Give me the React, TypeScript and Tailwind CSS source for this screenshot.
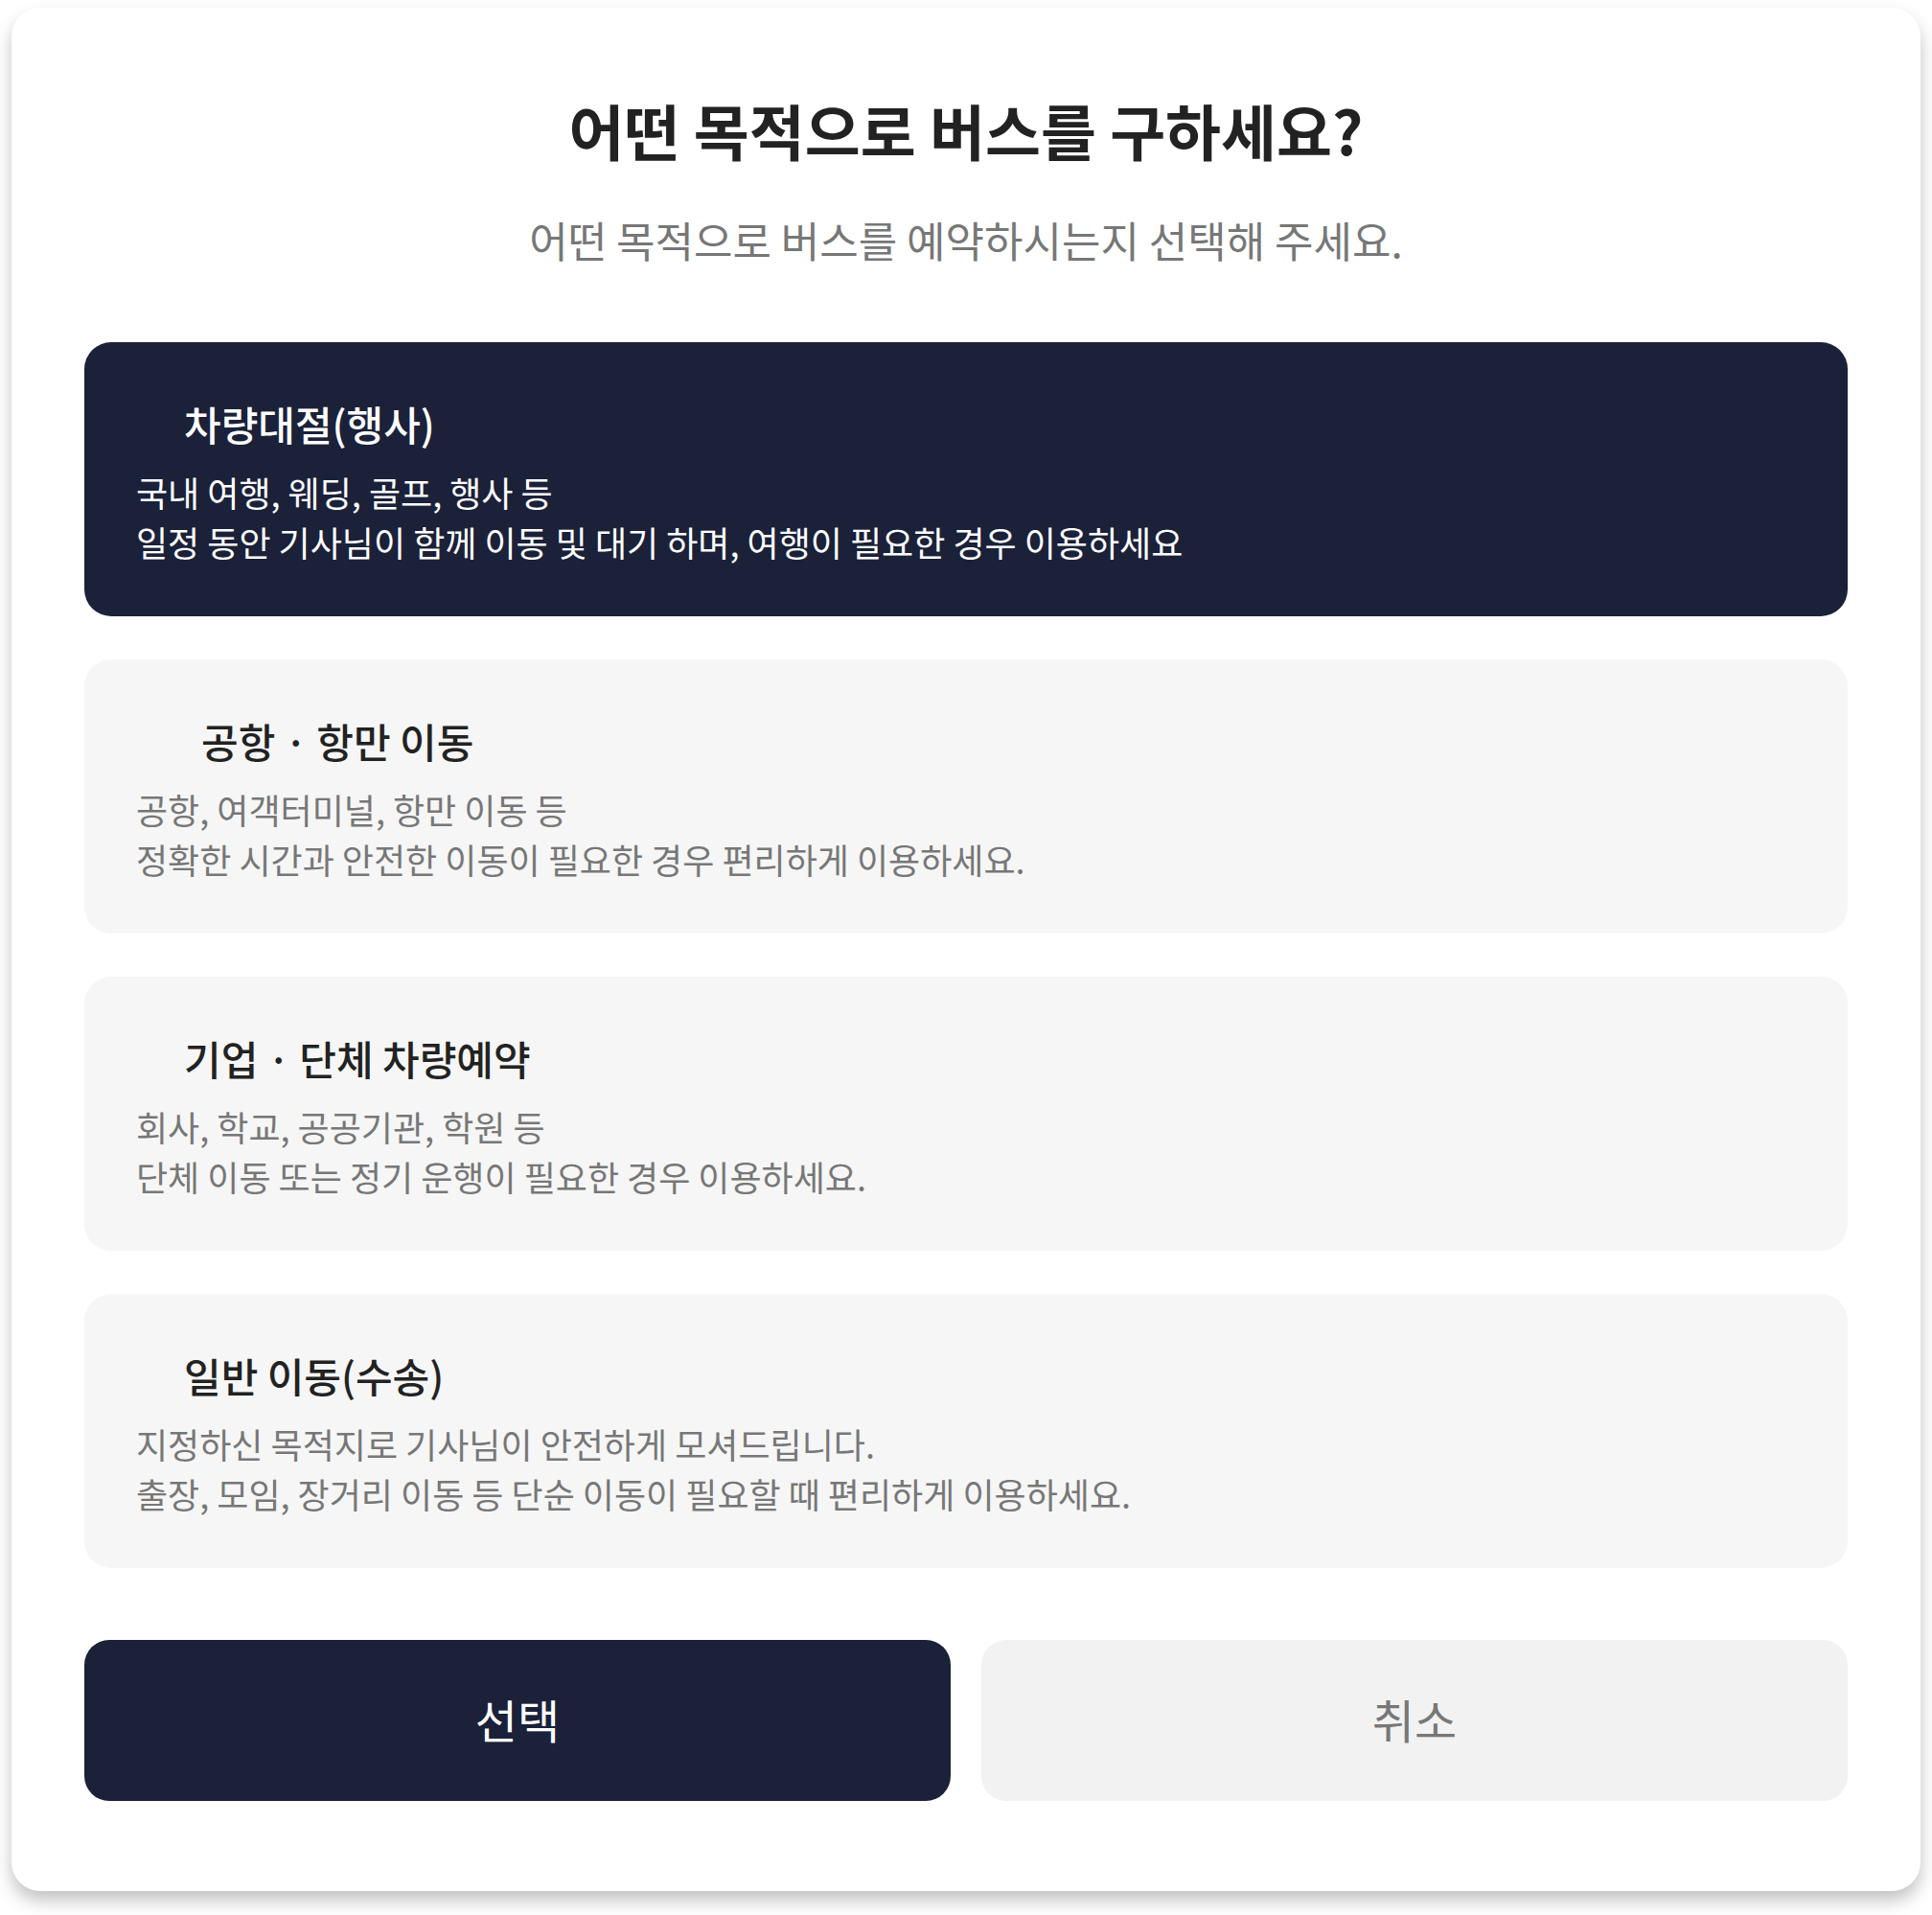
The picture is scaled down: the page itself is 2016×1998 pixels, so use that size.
const font = { fontFamily: '"Noto Sans CJK KR", "Noto Sans", sans-serif' }

type Purpose = {
  title: string
  lines: string[]
  indent: string
}

const purposes: Purpose[] = [
  {
    title: '차량대절(행사)',
    lines: ['국내 여행, 웨딩, 골프, 행사 등', '일정 동안 기사님이 함께 이동 및 대기 하며, 여행이 필요한 경우 이용하세요'],
    indent: 'pl-[50px]',
  },
  {
    title: '공항 · 항만 이동',
    lines: ['공항, 여객터미널, 항만 이동 등', '정확한 시간과 안전한 이동이 필요한 경우 편리하게 이용하세요.'],
    indent: 'pl-[68px]',
  },
  {
    title: '기업 · 단체 차량예약',
    lines: ['회사, 학교, 공공기관, 학원 등', '단체 이동 또는 정기 운행이 필요한 경우 이용하세요.'],
    indent: 'pl-[50px]',
  },
  {
    title: '일반 이동(수송)',
    lines: ['지정하신 목적지로 기사님이 안전하게 모셔드립니다.', '출장, 모임, 장거리 이동 등 단순 이동이 필요할 때 편리하게 이용하세요.'],
    indent: 'pl-[50px]',
  },
]

function PurposeCard({ item, selected }: { item: Purpose; selected: boolean }) {
  return (
    <button
      type="button"
      className={`flex h-[286px] w-full flex-col rounded-[28px] px-[54px] pt-[53px] text-left ${
        selected ? 'bg-[#1b2139]' : 'bg-[#f6f6f6]'
      }`}
    >
      <span
        className={`${item.indent} text-[42px] leading-[63px] font-medium ${
          selected ? 'text-white' : 'text-[#222222]'
        }`}
      >
        {item.title}
      </span>
      <span
        className={`mt-[14px] flex flex-col text-[36px] leading-[52px] ${
          selected ? 'text-white' : 'text-[#777777]'
        }`}
      >
        {item.lines.map((line) => (
          <span key={line}>{line}</span>
        ))}
      </span>
    </button>
  )
}

export default function App() {
  return (
    <div className="min-h-screen bg-white px-[12px] pt-[8px] pb-[27px]" style={font}>
      <div className="rounded-[30px] bg-white px-[76px] pt-[90px] pb-[94px] shadow-[0_10px_18px_rgba(0,0,0,0.24)]">
        <h1 className="text-center text-[63px] leading-[74px] font-bold text-[#222222]">
          어떤 목적으로 버스를 구하세요?
        </h1>
        <p className="mt-[50px] text-center text-[44px] leading-[56px] text-[#777777]">
          어떤 목적으로 버스를 예약하시는지 선택해 주세요.
        </p>

        <div className="mt-[79px] flex flex-col gap-[45px]">
          {purposes.map((item, i) => (
            <PurposeCard key={item.title} item={item} selected={i === 0} />
          ))}
        </div>

        <div className="mt-[75px] grid grid-cols-2 gap-[32px]">
          <button
            type="button"
            className="h-[168px] rounded-[26px] bg-[#1b2139] pb-[5px] text-[48px] text-white"
          >
            선택
          </button>
          <button
            type="button"
            className="h-[168px] rounded-[26px] bg-[#f2f2f2] pb-[5px] text-[48px] text-[#777777]"
          >
            취소
          </button>
        </div>
      </div>
    </div>
  )
}
